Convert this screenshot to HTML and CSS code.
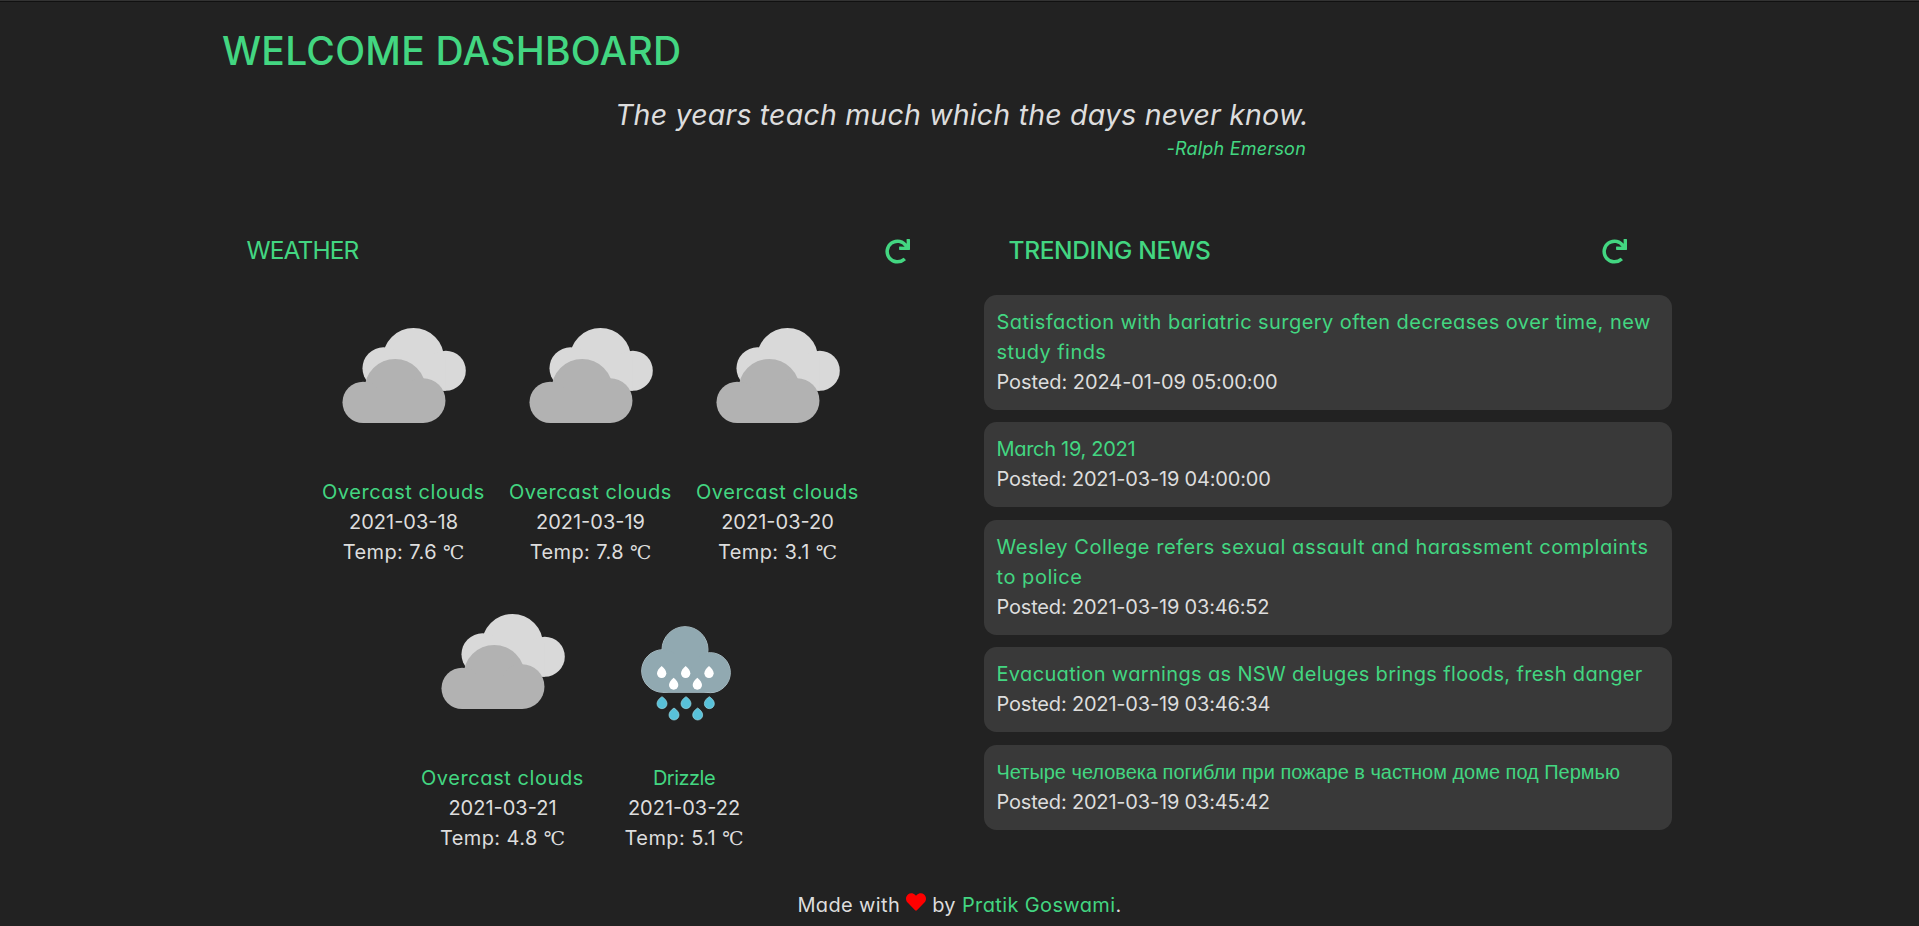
FILE: index.html
```html
<!DOCTYPE html>
<html lang="en">
<head>
<meta charset="utf-8">
<title>Welcome Dashboard</title>
<link rel="stylesheet" href="styles.css">
</head>
<body>
<svg class="sprite" aria-hidden="true">
  <symbol id="redo" viewBox="0 0 512 512"><path d="M500.33 0h-47.41a12 12 0 0 0-12 12.57l4 82.76A247.42 247.42 0 0 0 256 8C119.34 8 7.9 119.53 8 256.19 8.1 393.07 119.1 504 256 504a247.1 247.1 0 0 0 166.18-63.91 12 12 0 0 0 .48-17.43l-34-34a12 12 0 0 0-16.38-.55A176 176 0 1 1 402.1 157.8l-101.53-4.87a12 12 0 0 0-12.57 12v47.41a12 12 0 0 0 12 12h200.33a12 12 0 0 0 12-12V12a12 12 0 0 0-12-12z"/></symbol>
  <symbol id="clouds" viewBox="26.6 -24 450 450">
    <g fill="#d9d9d9"><circle cx="280" cy="146" r="92"/><circle cx="190" cy="175" r="63"/><circle cx="377" cy="182" r="60"/><path d="M190 140h187v102H190z"/></g>
    <g fill="#b2b2b2"><circle cx="225" cy="239" r="92"/><circle cx="129" cy="277" r="62"/><circle cx="309" cy="272" r="67"/><path d="M129 240h180v99H129z"/></g>
  </symbol>
  <symbol id="drizzle" viewBox="27 -7 450 450">
    <g fill="#91a9b1" stroke="#a9bcc3" stroke-width="3"><circle cx="255" cy="178" r="69"/><circle cx="189" cy="242" r="64"/><circle cx="331" cy="247" r="60"/><path d="M189 306h142"/></g>
    <path fill="#91a9b1" d="M189 180h132v126H189z"/>
    <circle fill="#91a9b1" cx="255" cy="178" r="68"/><circle fill="#91a9b1" cx="189" cy="242" r="63"/><circle fill="#91a9b1" cx="331" cy="247" r="59"/>
    <g fill="#fff"><path id="d" d="M185 227c8 7 14 14 14 22a14 14 0 0 1-28 0c0-8 6-15 14-22z"/><use href="#d" x="72"/><use href="#d" x="142"/><use href="#d" x="36" y="35"/><use href="#d" x="107" y="35"/></g>
    <g fill="#58c1d9" stroke="#9bdbe6" stroke-width="2"><path id="b" d="M186 319c9 6 15 13 15 21a15 15 0 0 1-30 0c0-8 6-15 15-21z"/><use href="#b" x="72"/><use href="#b" x="142"/><use href="#b" x="36" y="34"/><use href="#b" x="107" y="34"/></g>
  </symbol>
</svg>
<div class="page">
  <h1 class="title">WELCOME DASHBOARD</h1>
  <div class="quote">
    <p class="quote-text">The years teach much which the days never know.</p>
    <p class="quote-author">-Ralph Emerson</p>
  </div>
  <main class="columns">
    <section class="weather">
      <header class="head"><h2 class="head-title light">WEATHER</h2><svg class="redo"><use href="#redo"/></svg></header>
      <div class="forecast">
        <article class="day"><svg class="icon"><use href="#clouds"/></svg><p class="sky">Overcast clouds</p><p class="date">2021-03-18</p><p class="temp">Temp: 7.6 <span class="unit">℃</span></p></article>
        <article class="day"><svg class="icon"><use href="#clouds"/></svg><p class="sky">Overcast clouds</p><p class="date">2021-03-19</p><p class="temp">Temp: 7.8 <span class="unit">℃</span></p></article>
        <article class="day"><svg class="icon"><use href="#clouds"/></svg><p class="sky">Overcast clouds</p><p class="date">2021-03-20</p><p class="temp">Temp: 3.1 <span class="unit">℃</span></p></article>
        <article class="day"><svg class="icon"><use href="#clouds"/></svg><p class="sky">Overcast clouds</p><p class="date">2021-03-21</p><p class="temp">Temp: 4.8 <span class="unit">℃</span></p></article>
        <article class="day narrow"><svg class="icon"><use href="#drizzle"/></svg><p class="sky tight">Drizzle</p><p class="date">2021-03-22</p><p class="temp">Temp: 5.1 <span class="unit">℃</span></p></article>
      </div>
    </section>
    <section class="news">
      <header class="head"><h2 class="head-title">TRENDING NEWS</h2><svg class="redo"><use href="#redo"/></svg></header>
      <div class="cards">
        <article class="card"><a class="link">Satisfaction with bariatric surgery often decreases over time, new<br>study finds</a><p class="posted first">Posted: 2024-01-09 05:00:00</p></article>
        <article class="card"><a class="link snug">March 19, 2021</a><p class="posted">Posted: 2021-03-19 04:00:00</p></article>
        <article class="card"><a class="link wide">Wesley College refers sexual assault and harassment complaints<br>to police</a><p class="posted">Posted: 2021-03-19 03:46:52</p></article>
        <article class="card"><a class="link compact">Evacuation warnings as NSW deluges brings floods, fresh danger</a><p class="posted">Posted: 2021-03-19 03:46:34</p></article>
        <article class="card"><a class="link cyrillic" lang="ru">Четыре человека погибли при пожаре в частном доме под Пермью</a><p class="posted">Posted: 2021-03-19 03:45:42</p></article>
      </div>
    </section>
  </main>
  <footer class="footer">Made with <svg class="heart" viewBox="0 0 512 512"><path d="M462.3 62.6C407.5 15.9 326 24.3 275.7 76.2L256 96.5l-19.7-20.3C186.1 24.3 104.5 15.9 49.7 62.6c-62.8 53.6-66.1 149.8-9.9 207.9l193.5 199.8c12.5 12.9 32.8 12.9 45.3 0l193.5-199.8c56.3-58.1 53-154.3-9.8-207.9z"/></svg> by <a class="author">Pratik Goswami</a>.</footer>
</div>
</body>
</html>
```
FILE: styles.css
```css
* { box-sizing: border-box; margin: 0; padding: 0; }
body {
  height: 926px;
  overflow: hidden;
  background: #222;
  color: #ddd;
  font: 20px/30px Inter, "Liberation Sans", sans-serif;
  font-feature-settings: "cv11";
  border-top: 1px solid #333;
}
.sprite { display: none; }
.page {
  height: 925px;
  padding: 19px 222px 0;
  border-top: 1px solid #111;
  display: flex;
  flex-direction: column;
}
.title {
  color: #43d681;
  font-size: 39px;
  line-height: 60px;
  font-weight: 500;
  letter-spacing: .25px;
}
.quote { width: 691px; margin: 13px 0 0 393px; font-style: italic; text-align: right; white-space: nowrap; }
.quote-text { font-size: 28.5px; line-height: 42px; letter-spacing: .2px; }
.quote-author { font-size: 18px; line-height: 26px; letter-spacing: .22px; color: #43d681; }
.columns { display: grid; grid-template-columns: 737px 738px; margin-top: 69px; }
.head { display: flex; align-items: center; justify-content: space-between; height: 38px; }
.head-title { color: #43d681; font-size: 24.5px; line-height: 38px; font-weight: 500; letter-spacing: -.35px; }
.light { font-weight: 400; letter-spacing: -.9px; }
.redo { width: 25px; height: 25px; margin-top: 2px; fill: #43d681; }
.weather .head { padding: 0 49px 0 24.5px; }
.news { padding: 0 25px; }
.news .head { padding: 0 45px 0 24.5px; }
.forecast { display: flex; flex-wrap: wrap; justify-content: center; padding: 33px 60px 0; row-gap: 21px; }
.day { width: 187px; height: 265px; display: flex; flex-direction: column; align-items: center; white-space: nowrap; }
.narrow { width: 176px; }
.icon { width: 150px; height: 150px; margin-bottom: 25px; }
.sky { color: #43d681; letter-spacing: .58px; }
.tight { letter-spacing: -.5px; }
.temp { letter-spacing: .4px; }
.unit { font: 19px/1 "Liberation Serif", "DejaVu Serif", serif; letter-spacing: 0; }
.cards { display: flex; flex-direction: column; gap: 12.5px; margin-top: 25.5px; width: 688px; }
.card { background: #393939; border-radius: 12.5px; padding: 12px 12.5px 13px; white-space: nowrap; }
.link { display: block; color: #43d681; letter-spacing: .44px; }
.snug { letter-spacing: -.3px; }
.wide { letter-spacing: .55px; }
.compact { letter-spacing: .35px; }
.cyrillic { font-family: "Liberation Sans", sans-serif; letter-spacing: -.02px; }
.posted { letter-spacing: -.18px; }
.first { letter-spacing: -.07px; }
.footer { margin: auto 0 6px; text-align: center; letter-spacing: .37px; }
.heart { width: 20px; height: 20px; fill: #f00; vertical-align: 0; }
.author { color: #43d681; }
```
